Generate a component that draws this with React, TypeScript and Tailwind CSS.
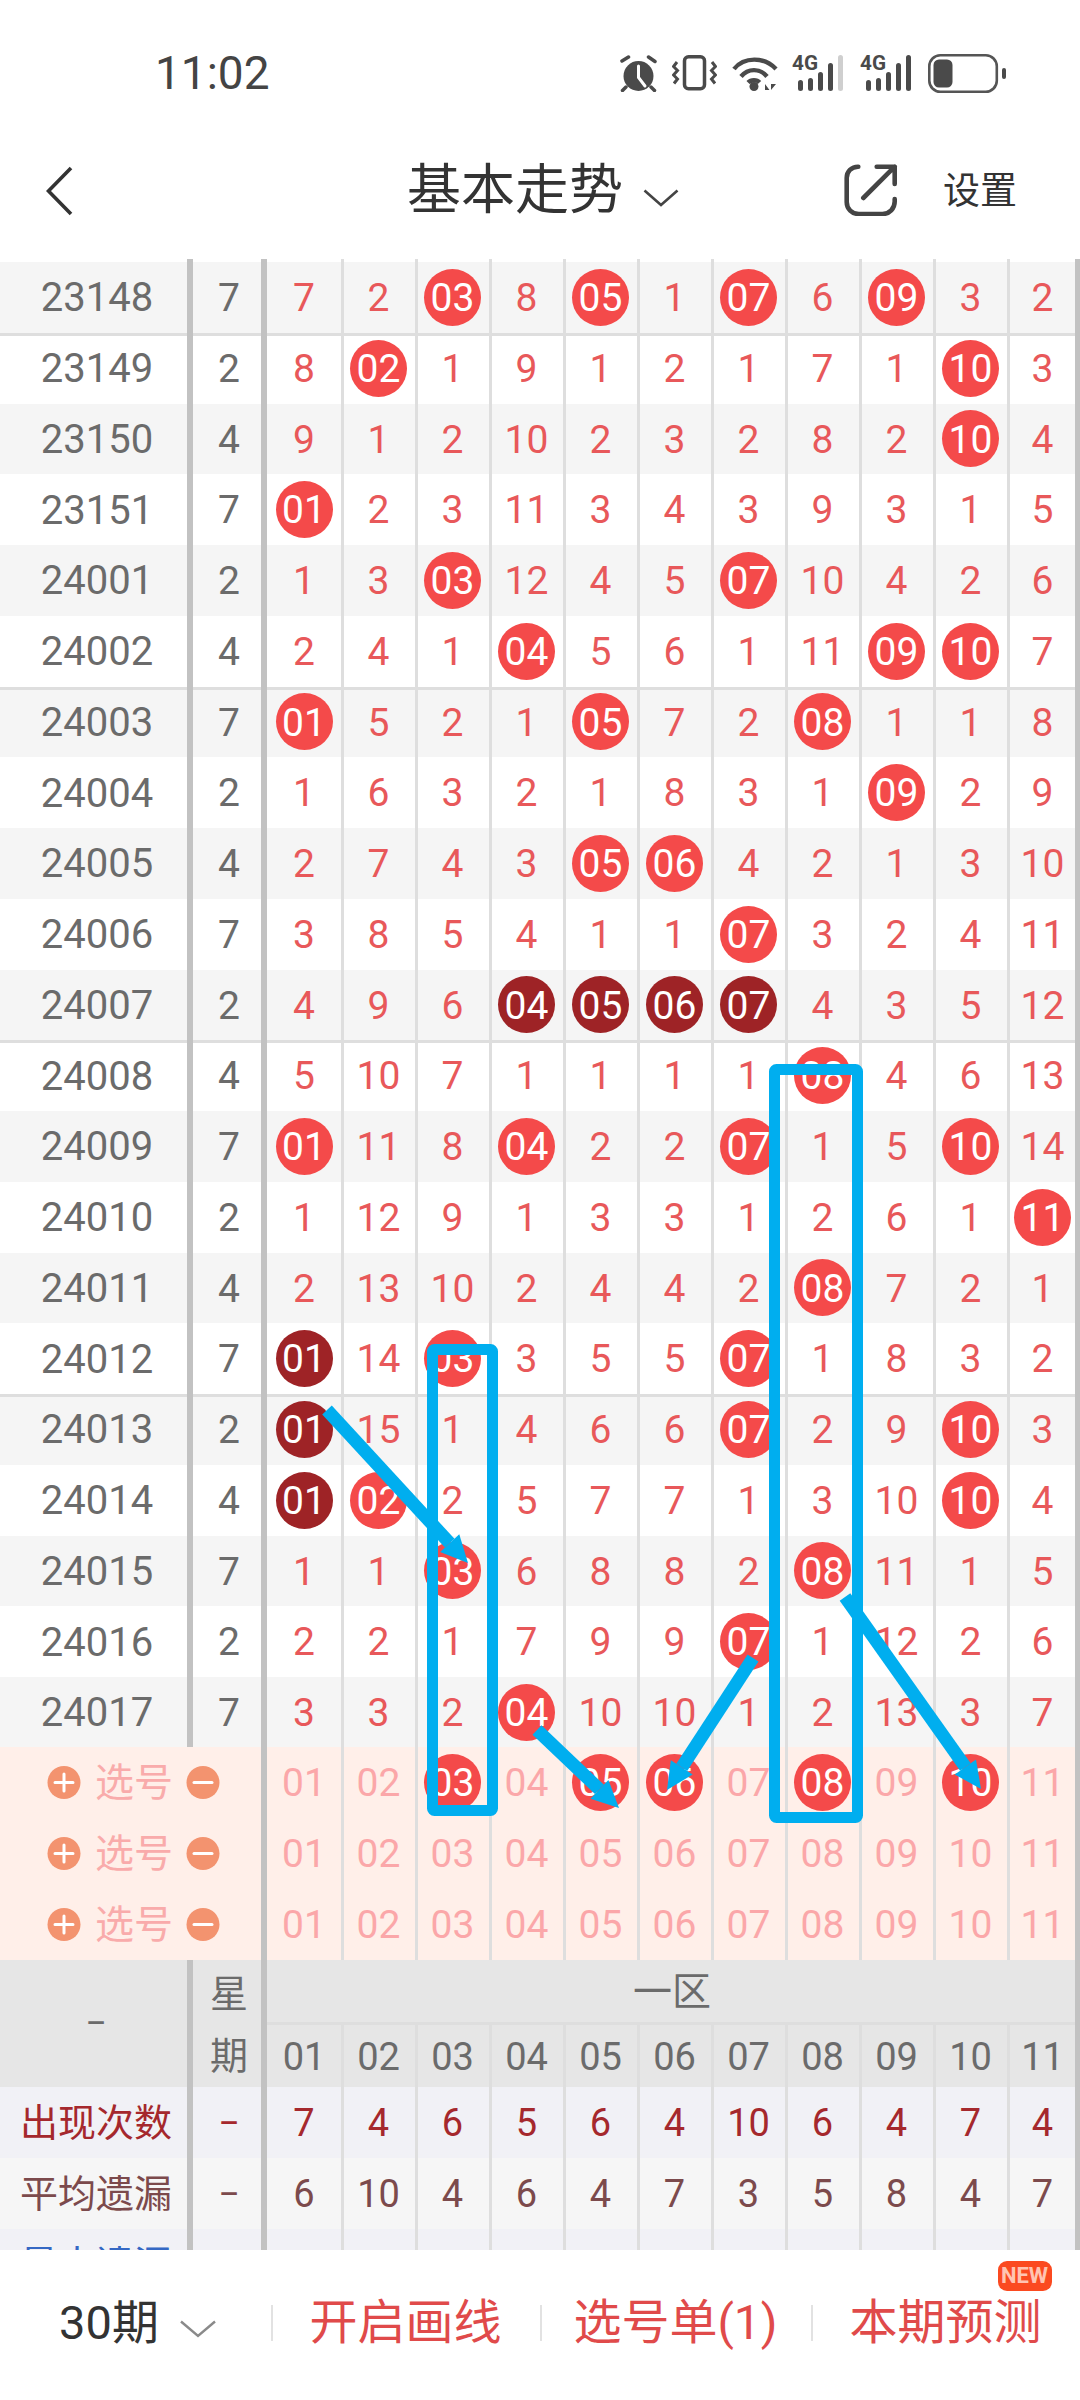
import React from "react";

const FONT = "font-['Roboto','Noto_Sans_CJK_SC',sans-serif]";

const rows: [string, string, string][] = [
  ["23148", "7", "7 2 r03 8 r05 1 r07 6 r09 3 2"],
  ["23149", "2", "8 r02 1 9 1 2 1 7 1 r10 3"],
  ["23150", "4", "9 1 2 10 2 3 2 8 2 r10 4"],
  ["23151", "7", "r01 2 3 11 3 4 3 9 3 1 5"],
  ["24001", "2", "1 3 r03 12 4 5 r07 10 4 2 6"],
  ["24002", "4", "2 4 1 r04 5 6 1 11 r09 r10 7"],
  ["24003", "7", "r01 5 2 1 r05 7 2 r08 1 1 8"],
  ["24004", "2", "1 6 3 2 1 8 3 1 r09 2 9"],
  ["24005", "4", "2 7 4 3 r05 r06 4 2 1 3 10"],
  ["24006", "7", "3 8 5 4 1 1 r07 3 2 4 11"],
  ["24007", "2", "4 9 6 d04 d05 d06 d07 4 3 5 12"],
  ["24008", "4", "5 10 7 1 1 1 1 r08 4 6 13"],
  ["24009", "7", "r01 11 8 r04 2 2 r07 1 5 r10 14"],
  ["24010", "2", "1 12 9 1 3 3 1 2 6 1 r11"],
  ["24011", "4", "2 13 10 2 4 4 2 r08 7 2 1"],
  ["24012", "7", "d01 14 r03 3 5 5 r07 1 8 3 2"],
  ["24013", "2", "d01 15 1 4 6 6 r07 2 9 r10 3"],
  ["24014", "4", "d01 r02 2 5 7 7 1 3 10 r10 4"],
  ["24015", "7", "1 1 r03 6 8 8 2 r08 11 1 5"],
  ["24016", "2", "2 2 1 7 9 9 r07 1 12 2 6"],
  ["24017", "7", "3 3 2 r04 10 10 1 2 13 3 7"],
];

const nums = ["01", "02", "03", "04", "05", "06", "07", "08", "09", "10", "11"];

function cellClass(i: number) {
  if (i === 0) return "w-[77px] shrink-0 border-r-[3px] border-[#dedede] pt-[2px] flex items-center justify-center";
  if (i < 10) return "w-[74px] shrink-0 border-r-[3px] border-[#dedede] pt-[2px] pr-[2px] flex items-center justify-center";
  return "flex-1 pt-[2px] flex items-center justify-center";
}

function Ball({ value, dark }: { value: string; dark?: boolean }) {
  return (
    <span
      className={`w-[57px] h-[57px] shrink-0 -mt-[2px] pt-[2px] rounded-full flex items-center justify-center text-white ${
        dark ? "bg-[#9e2326]" : "bg-[#f44a4a]"
      }`}
    >
      {value}
    </span>
  );
}

function DataRow({ id, week, data, index }: { id: string; week: string; data: string; index: number }) {
  const striped = index % 2 === 0;
  const line = index === 1 || index === 6 || index === 11 || index === 16;
  return (
    <div
      className={`flex h-[70.75px] shrink-0 text-[39px] ${striped ? "bg-[#f5f5f5]" : "bg-white"} ${
        line ? "shadow-[inset_0_3px_0_#dedede]" : ""
      }`}
    >
      <div className="w-[193px] shrink-0 border-r-[6px] border-[#c2c2c2] pl-[7px] pt-[2px] text-[40px] flex items-center justify-center text-[#6b6b6b]">
        {id}
      </div>
      <div className="w-[74px] shrink-0 border-r-[6px] border-[#c2c2c2] pl-[4px] pt-[2px] flex items-center justify-center text-[#6b6b6b]">
        {week}
      </div>
      <div className="flex-1 flex border-r-[5px] border-[#c2c2c2] text-[#e8585a]">
        {data.split(" ").map((v, i) => (
          <div key={i} className={cellClass(i)}>
            {v[0] === "r" ? <Ball value={v.slice(1)} /> : v[0] === "d" ? <Ball value={v.slice(1)} dark /> : v}
          </div>
        ))}
      </div>
    </div>
  );
}

function RoundSign({ minus }: { minus?: boolean }) {
  return (
    <svg width="34" height="33" viewBox="0 0 34 33">
      <circle cx="17" cy="16.5" r="16.5" fill="#f3936f" />
      <path d={minus ? "M8 16.5H26" : "M8 16.5H26M17 8V25"} stroke="#fff" strokeWidth="3" strokeLinecap="round" />
    </svg>
  );
}

function PickRow({ picked }: { picked: string[] }) {
  return (
    <div className="flex h-[71px] shrink-0 bg-[#ffefe9] text-[39px]">
      <div className="w-[267px] shrink-0 border-r-[6px] border-[#c2c2c2] flex items-center pl-[47px]">
        <RoundSign />
        <span className="ml-[14px] pt-[2px] w-[78px] text-[#f9abab] whitespace-nowrap">选号</span>
        <span className="ml-[13px] flex">
          <RoundSign minus />
        </span>
      </div>
      <div className="flex-1 flex border-r-[5px] border-[#c2c2c2] text-[#fba7a9]">
        {nums.map((n, i) => (
          <div key={n} className={cellClass(i)}>
            {picked.includes(n) ? <Ball value={n} /> : n}
          </div>
        ))}
      </div>
    </div>
  );
}

function StatRow({
  label,
  values,
  bg,
  labelColor,
  color,
}: {
  label: string;
  values: string;
  bg: string;
  labelColor: string;
  color: string;
}) {
  return (
    <div className={`flex h-[71px] shrink-0 text-[38px] ${bg}`}>
      <div
        className={`w-[193px] shrink-0 border-r-[6px] border-[#c2c2c2] pl-[5px] pt-[2px] flex items-center justify-center whitespace-nowrap ${labelColor}`}
      >
        {label}
      </div>
      <div className={`w-[74px] shrink-0 border-r-[6px] border-[#c2c2c2] pl-[4px] pt-[2px] flex items-center justify-center ${color}`}>
        −
      </div>
      <div className={`flex-1 flex border-r-[5px] border-[#c2c2c2] ${color}`}>
        {values.split(" ").map((v, i) => (
          <div key={i} className={cellClass(i)}>
            {v}
          </div>
        ))}
      </div>
    </div>
  );
}

function Signal({ full }: { full?: boolean }) {
  const tops = [25, 23, 17, 8, 0];
  return (
    <svg width="53" height="36" viewBox="0 0 53 36" className="block">
      <text x="0" y="15" fontFamily="Roboto" fontWeight="700" fontSize="20" fill="#4a4a4a" textLength="26" lengthAdjust="spacingAndGlyphs">
        4G
      </text>
      {tops.map((t, i) => (
        <rect
          key={i}
          x={6 + i * 10}
          y={t}
          width="5"
          height={36 - t}
          rx="2.5"
          fill={i === 4 && !full ? "#cfcfcf" : "#4a4a4a"}
        />
      ))}
    </svg>
  );
}

function StatusIcons() {
  return (
    <div className="flex items-center">
      <svg width="39" height="37" viewBox="0 0 39 37" className="block">
        <path d="M3 6L9.5 2M29.5 2L36 6.5M7 32L3.5 35.5M32 32L35.5 35.5" stroke="#4a4a4a" strokeWidth="3.5" strokeLinecap="round" />
        <circle cx="19.5" cy="21" r="15" fill="#4a4a4a" />
        <path d="M19.5 11V22.5L26 31" stroke="#fff" strokeWidth="3" fill="none" strokeLinecap="round" />
      </svg>
      <svg width="45" height="36" viewBox="0 0 45 36" className="block ml-[14px]">
        <rect x="12.5" y="1.8" width="20" height="32" rx="4" fill="none" stroke="#4a4a4a" strokeWidth="3.5" />
        <path d="M5 7L1.5 11.5L5.5 15.5L1.5 20L5.5 24L2 28.5M40 7L43.5 11.5L39.5 15.5L43.5 20L39.5 24L43 28.5" fill="none" stroke="#4a4a4a" strokeWidth="3" />
      </svg>
      <svg width="46" height="36" viewBox="0 0 46 36" className="block ml-[15px]">
        <path d="M2 14C12 1.5 32 1.5 44 14M9 21.5C16 13 28 13 35 21.5M16 27.5C19 24.5 25 24.5 27.5 27.5" fill="none" stroke="#4a4a4a" strokeWidth="4.4" />
        <circle cx="22" cy="31.5" r="4.5" fill="#4a4a4a" />
        <path d="M33 35V29L37.5 35ZM39 29V35L44 29Z" fill="#4a4a4a" />
      </svg>
      <div className="ml-[14px]">
        <Signal />
      </div>
      <div className="ml-[15px]">
        <Signal full />
      </div>
      <svg width="78" height="39" viewBox="0 0 78 39" className="block ml-[15px]">
        <rect x="1.3" y="1.3" width="67.5" height="36.4" rx="11" fill="none" stroke="#555" strokeWidth="2.6" />
        <rect x="5.5" y="5.5" width="19" height="28" rx="5.5" fill="#4a4a4a" />
        <rect x="74" y="14" width="4" height="11" rx="2" fill="#4a4a4a" />
      </svg>
    </div>
  );
}

function Arrow({ x1, y1, x2, y2 }: { x1: number; y1: number; x2: number; y2: number }) {
  const a = Math.atan2(y2 - y1, x2 - x1);
  const c = Math.cos(a);
  const s = Math.sin(a);
  const len = 27;
  const half = 13;
  const bx = x2 - c * len;
  const by = y2 - s * len;
  return (
    <g>
      <line x1={x1} y1={y1} x2={bx} y2={by} stroke="#00aeef" strokeWidth="13" />
      <polygon points={`${x2},${y2} ${bx - s * half},${by + c * half} ${bx + s * half},${by - c * half}`} fill="#00aeef" />
    </g>
  );
}

export default function App() {
  return (
    <div className={`relative w-[1080px] h-[2400px] overflow-hidden bg-white flex flex-col ${FONT}`}>
      {/* status bar */}
      <div className="h-[110px] shrink-0 pt-[36px] pl-[155px] pr-[74px] flex items-start justify-between">
        <span className="text-[46px] leading-[74px] h-[74px] text-[#444]">11:02</span>
        <div className="h-[74px] flex items-center">
          <StatusIcons />
        </div>
      </div>

      {/* nav */}
      <div className="h-[149px] shrink-0 pt-[10px] flex items-center">
        <svg width="27" height="50" viewBox="0 0 27 50" className="ml-[46px] mt-[2px] shrink-0">
          <path d="M25 2L2.5 25L25 48" fill="none" stroke="#333" strokeWidth="3.6" />
        </svg>
        <span className="ml-[334px] pt-[3px] text-[54px] leading-none text-[#333] whitespace-nowrap w-[216px]">基本走势</span>
        <svg width="36" height="18" viewBox="0 0 36 18" className="ml-[20px] mt-[16px] shrink-0">
          <path d="M1.5 1.5L18 16L34.5 1.5" fill="none" stroke="#444" strokeWidth="2.6" />
        </svg>
        <svg width="54" height="52" viewBox="0 0 54 52" className="ml-[165px] shrink-0">
          <path
            d="M14.3 2.7H14C7.5 2.7 2.7 7.5 2.7 14V38C2.7 44.8 8 50 14.8 50H38.5C45.5 50 50.7 44.5 50.7 37.5V35M19.3 34L50.7 2.7M32.7 2.7H50.7V20"
            fill="none"
            stroke="#444"
            strokeWidth="4.6"
            strokeLinecap="round"
            strokeLinejoin="round"
          />
        </svg>
        <span className="ml-[45px] pt-[3px] text-[37px] leading-none text-[#333] whitespace-nowrap">设置</span>
      </div>

      {/* table */}
      <div className="h-[1991px] shrink-0 overflow-hidden flex flex-col">
        <div className="flex h-[3px] shrink-0 bg-white">
          <div className="w-[193px] shrink-0 border-r-[6px] border-[#c2c2c2]" />
          <div className="w-[74px] shrink-0 border-r-[6px] border-[#c2c2c2]" />
          <div className="flex-1 flex border-r-[5px] border-[#c2c2c2]">
            {nums.map((n, i) => (
              <div key={n} className={cellClass(i)} />
            ))}
          </div>
        </div>
        {rows.map(([id, week, data], i) => (
          <DataRow key={id} id={id} week={week} data={data} index={i} />
        ))}
        <div className="-mt-[0.75px]">
          <PickRow picked={["03", "05", "06", "08", "10"]} />
          <PickRow picked={[]} />
          <PickRow picked={[]} />
        </div>

        {/* header block */}
        <div className="flex h-[127px] shrink-0 bg-[#e6e6e6] text-[38px] text-[#6b6b6b]">
          <div className="w-[193px] shrink-0 border-r-[6px] border-[#c2c2c2] pl-[5px] flex items-center justify-center">−</div>
          <div className="w-[74px] shrink-0 border-r-[6px] border-[#c2c2c2] pl-[4px] pt-[3px] flex flex-col items-center justify-around">
            <span>星</span>
            <span>期</span>
          </div>
          <div className="flex-1 flex flex-col border-r-[5px] border-[#c2c2c2]">
            <div className="h-[65px] shrink-0 border-b-[3px] border-[#dedede] pt-[3px] pl-[2px] text-[39px] flex items-center justify-center">一区</div>
            <div className="flex-1 flex">
              {nums.map((n, i) => (
                <div key={n} className={cellClass(i)}>
                  {n}
                </div>
              ))}
            </div>
          </div>
        </div>

        <StatRow label="出现次数" values="7 4 6 5 6 4 10 6 4 7 4" bg="bg-[#f1f1f6]" labelColor="text-[#a5282d]" color="text-[#a5282d]" />
        <StatRow label="平均遗漏" values="6 10 4 6 4 7 3 5 8 4 7" bg="bg-[#f6f6f6]" labelColor="text-[#7c4a4c]" color="text-[#7c4a4c]" />
        <StatRow label="最大遗漏" values="14 15 10 12 10 10 8 10 13 9 14" bg="bg-[#f1f1f6]" labelColor="text-[#3568c4]" color="text-[#888]" />
      </div>

      {/* footer */}
      <div className="flex-1 flex items-center pb-[4px] bg-white text-[48px]">
        <div className="w-[271px] shrink-0 flex items-center justify-center pl-[4px] text-[#333]">
          <span className="text-[47px] whitespace-nowrap">30期</span>
          <svg width="36" height="18" viewBox="0 0 36 18" className="ml-[21px] mt-[12px] shrink-0">
            <path d="M1 1.5L18 16L35 1.5" fill="none" stroke="#8a8a8a" strokeWidth="2.4" />
          </svg>
        </div>
        <div className="w-[2px] h-[36px] shrink-0 bg-[#e2e2e2]" />
        <div className="w-[267px] shrink-0 pr-[2px] flex justify-center text-[#e04a4a] whitespace-nowrap">开启画线</div>
        <div className="w-[2px] h-[36px] shrink-0 bg-[#e2e2e2]" />
        <div className="w-[269px] shrink-0 pr-[2px] flex justify-center text-[#e04a4a] whitespace-nowrap">选号单(1)</div>
        <div className="w-[2px] h-[36px] shrink-0 bg-[#e2e2e2]" />
        <div className="flex-1 pr-[2px] flex justify-center text-[#e04a4a] whitespace-nowrap">
          <span className="relative">
            本期预测
            <span className="absolute -right-[10px] -top-[26px] w-[54px] h-[30px] rounded-[9px] bg-[#fb4a20] text-[#ffc4b2] text-[22px] leading-[30px] font-bold text-center">
              NEW
            </span>
          </span>
        </div>
      </div>

      {/* hand-drawn annotations */}
      <svg className="absolute inset-0 pointer-events-none" width="1080" height="2400" viewBox="0 0 1080 2400">
        <rect x="432.5" y="1349.5" width="60" height="461" rx="2" fill="none" stroke="#00aeef" strokeWidth="11" />
        <rect x="774.5" y="1069.5" width="83" height="748" rx="2" fill="none" stroke="#00aeef" strokeWidth="11" />
        <Arrow x1={327} y1={1410} x2={468} y2={1563} />
        <Arrow x1={537} y1={1730} x2={619} y2={1808} />
        <Arrow x1={753} y1={1658} x2={667} y2={1790} />
        <Arrow x1={845} y1={1597} x2={981} y2={1789} />
      </svg>
    </div>
  );
}
